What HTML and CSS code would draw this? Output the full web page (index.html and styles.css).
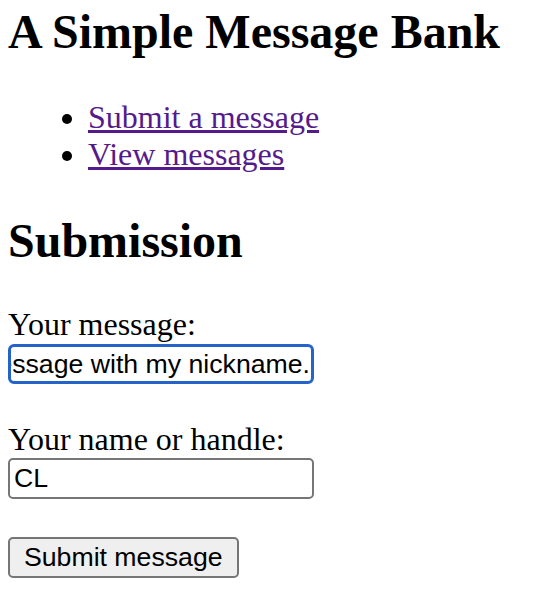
FILE: index.html
```html
<!DOCTYPE html>
<html lang="en">
<head>
<meta charset="utf-8">
<title>A Simple Message Bank</title>
<link rel="stylesheet" href="styles.css">
</head>
<body>
<h1 class="title">A Simple Message Bank</h1>
<ul class="nav">
  <li><a href="#submit">Submit a message</a></li>
  <li><a href="#view">View messages</a></li>
</ul>
<h2 class="section-title">Submission</h2>
<form class="form">
  <label class="label" for="message">Your message:</label>
  <div class="field field-focused" id="message" role="textbox"><span class="field-text">Hi, this is a message with my nickname.</span></div>
  <label class="label label-second" for="handle">Your name or handle:</label>
  <div class="field" id="handle" role="textbox"><span class="field-text">CL</span></div>
  <button class="btn" type="button">Submit message</button>
</form>
</body>
</html>
```

FILE: styles.css
```css
html, body {
  background: #ffffff;
}
body {
  margin: 0;
  padding: 0 0 0 8px;
  font-family: "Liberation Serif", "Times New Roman", serif;
  font-size: 32px;
  color: #000;
}
.title {
  font-size: 48px;
  font-weight: bold;
  line-height: 55px;
  margin: 4px 0 40px;
}
.nav {
  margin: 0 0 40px;
  padding-left: 80px;
  line-height: 37px;
}
.nav a {
  color: #551a8b;
  text-decoration: underline;
}
.section-title {
  font-size: 48px;
  font-weight: bold;
  line-height: 55px;
  margin: 0 0 38px;
}
.form {
  display: flex;
  flex-direction: column;
  align-items: flex-start;
}
.label {
  display: block;
  line-height: 37px;
  margin-bottom: 1px;
}
.label-second {
  margin-top: 37px;
  margin-bottom: 0;
}
.field {
  box-sizing: border-box;
  width: 306px;
  height: 41px;
  border: 2px solid #767676;
  border-radius: 5px;
  padding: 0 4px;
  display: flex;
  align-items: center;
  justify-content: flex-start;
  overflow: hidden;
  font-family: "Liberation Sans", Arial, sans-serif;
  font-size: 26.67px;
  background: #fff;
  white-space: nowrap;
}
.field-focused {
  border: 3px solid #2463c8;
  border-radius: 6px;
  padding: 0 1px 0 3px;
  justify-content: flex-end;
  height: 40px;
}
.field-text {
  flex: none;
}
.btn {
  box-sizing: border-box;
  margin-top: 38px;
  height: 41px;
  padding: 0 14px;
  border: 2px solid #767676;
  border-radius: 5px;
  background: #efefef;
  font-family: "Liberation Sans", Arial, sans-serif;
  font-size: 26.67px;
  color: #000;
}
```
